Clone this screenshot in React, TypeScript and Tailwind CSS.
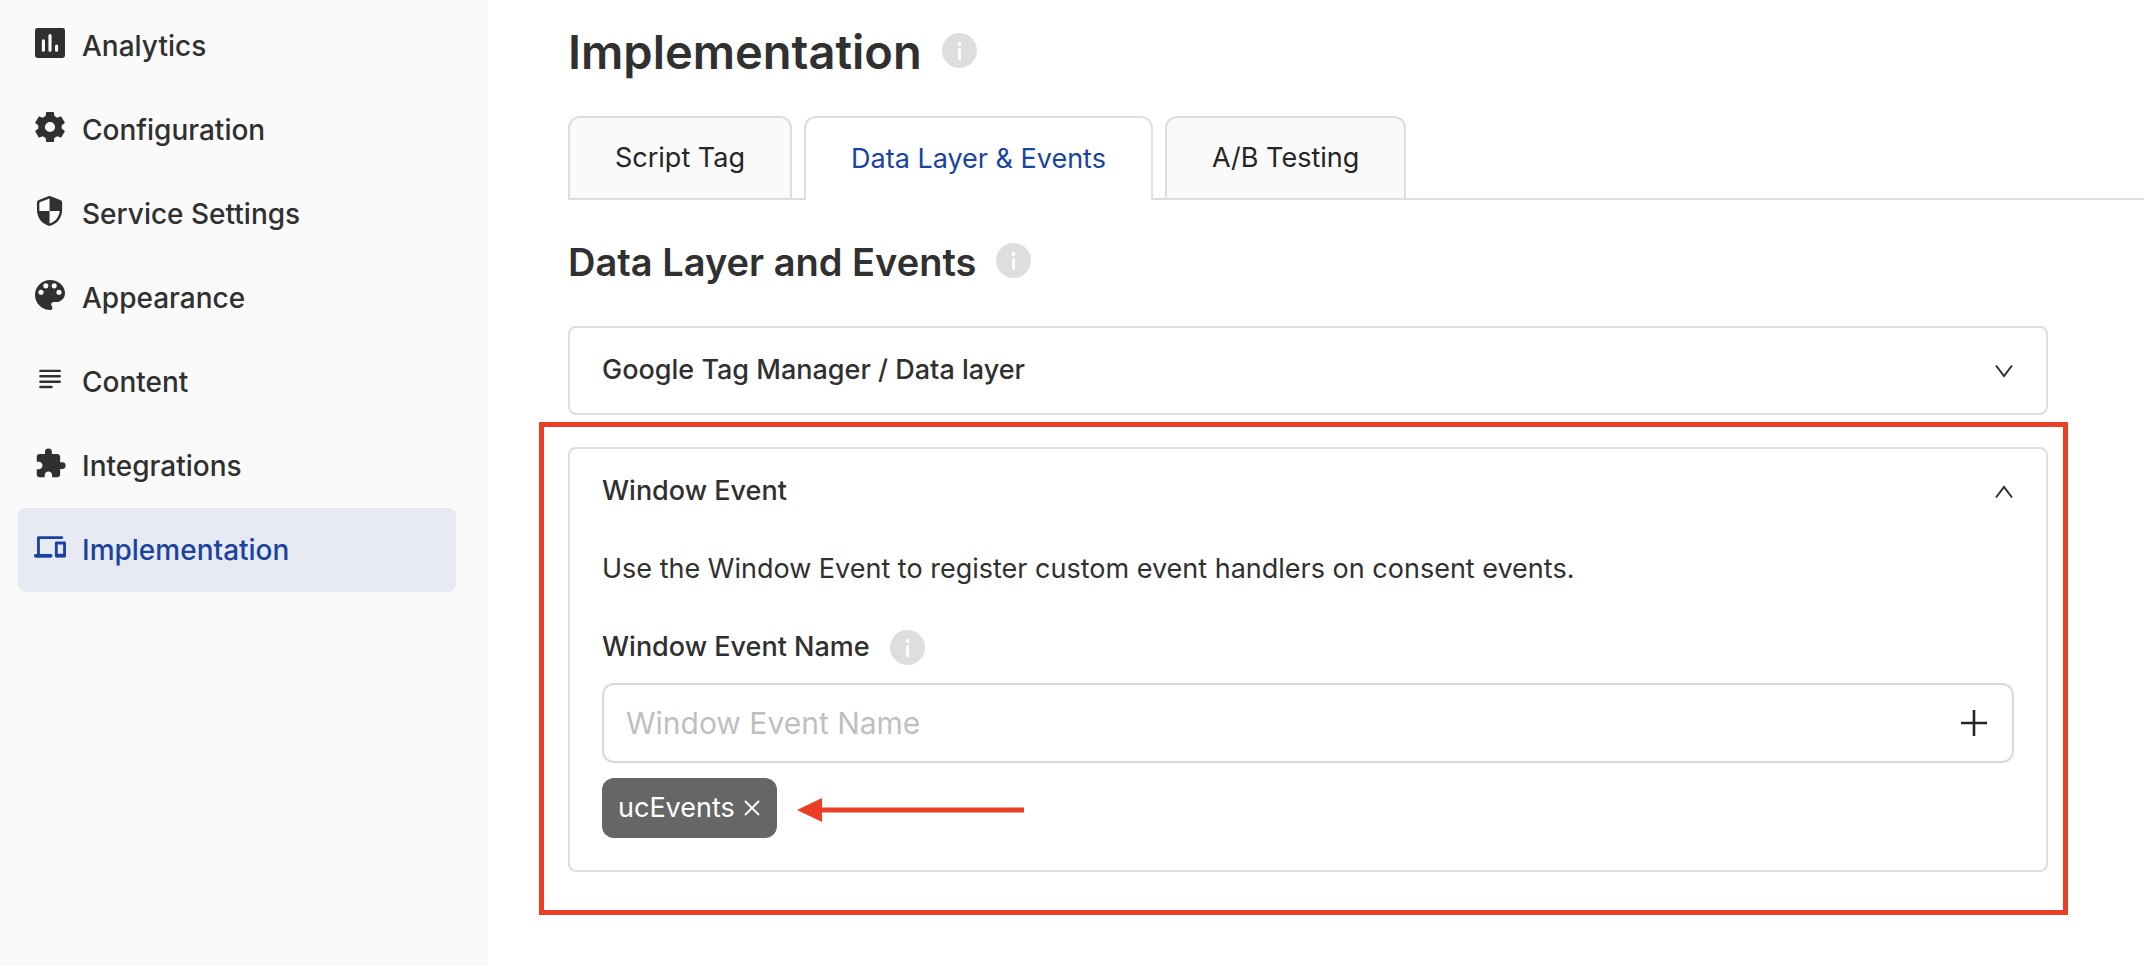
import { useState } from 'react';
import type { ReactNode } from 'react';
import { MdExtension } from 'react-icons/md';

const ChartIcon = () => (
    <svg viewBox="0 0 24 24" className="h-9 w-9" aria-hidden="true">
        <rect x="2" y="2" width="20" height="20" rx="1.6" fill="currentColor" />
        <path d="M7.6 10.600v6.200M12 7v9.800M16.400 14.100v2.700" stroke="#fafafa" strokeWidth="2.1" strokeLinecap="round" />
    </svg>
);

const GearIcon = () => (
    <svg viewBox="0 0 24 24" className="h-9 w-9" fill="currentColor" aria-hidden="true">
        <circle cx="12" cy="12" r="5.6" fill="none" stroke="currentColor" strokeWidth="4.4" />
        {[0, 60, 120, 180, 240, 300].map((angle) => (
            <path
                key={angle}
                d="M9.800 2.400h4.400l.5 3.600H9.300z"
                stroke="currentColor"
                strokeWidth=".8"
                strokeLinejoin="round"
                transform={`rotate(${angle} 12 12)`}
            />
        ))}
    </svg>
);

const ShieldIcon = () => (
    <svg viewBox="0 0 24 24" className="h-9 w-9" fill="currentColor" aria-hidden="true">
        <path d="M10.900 2.200 4.600 4.700C3.800 5 3.300 5.700 3.300 6.500V11c0 5.600 3.400 9.700 8.400 11 5-1.300 8.400-5.400 8.400-11V6.500c0-.8-.5-1.500-1.300-1.800l-6.300-2.500a2.200 2.200 0 0 0-1.600 0zM11.700 12h6.800c-.5 4-3 7.300-6.800 8.400V12H4.900V6.900c0-.4.2-.7.6-.9l6.200-2.400z" />
    </svg>
);

const PaletteIcon = () => (
    <svg viewBox="0 0 24 24" className="h-9 w-9" aria-hidden="true">
        <path
            d="M12 2C6.500 2 2 6.500 2 12s4.500 10 10 10c.9 0 1.600-.6 1.600-1.400 0-.5-.2-.9-.4-1.200-.2-.3-.4-.7-.4-1.100 0-.9.700-1.600 1.600-1.600h1.600c3.300 0 6-2.700 6-5.900C22 5.900 17.500 2 12 2z"
            fill="currentColor"
        />
        <g fill="#fafafa">
            <circle cx="6" cy="10.200" r="1.700" />
            <circle cx="9.200" cy="5.900" r="1.700" />
            <circle cx="14.800" cy="5.900" r="1.700" />
            <circle cx="18" cy="10.200" r="1.700" />
        </g>
    </svg>
);

const LinesIcon = () => (
    <svg viewBox="0 0 24 24" className="h-9 w-9" stroke="currentColor" strokeWidth="1.6" strokeLinecap="round" aria-hidden="true">
        <path d="M5.600 6.600h12.900M5.600 10.200h12.900M5.600 13.800h12.900M5.600 17.300h7.400" />
    </svg>
);

const DevicesIcon = () => (
    <svg viewBox="0 0 24 24" className="h-9 w-9" fill="none" stroke="currentColor" strokeWidth="1.9" strokeLinecap="round" strokeLinejoin="round" aria-hidden="true">
        <path d="M19.900 5.700H4.300v11" />
        <path d="M2.500 17.900h10" strokeWidth="2.400" />
        <rect x="16.200" y="9.300" width="5.500" height="8.700" />
        <path d="M16.500 17.700h5" strokeWidth="2.400" />
    </svg>
);

const navItems = [
    { label: 'Analytics', icon: <ChartIcon /> },
    { label: 'Configuration', icon: <GearIcon /> },
    { label: 'Service Settings', icon: <ShieldIcon /> },
    { label: 'Appearance', icon: <PaletteIcon /> },
    { label: 'Content', icon: <LinesIcon /> },
    { label: 'Integrations', icon: <MdExtension size={33} /> },
    { label: 'Implementation', icon: <DevicesIcon /> },
];

const tabs = ['Script Tag', 'Data Layer & Events', 'A/B Testing'];

const InfoButton = () => (
    <button type="button" aria-label="More information" className="h-[35px] w-[35px] shrink-0 rounded-full bg-[#dedede] text-white">
        <svg viewBox="0 0 35 35" className="h-[35px] w-[35px]" stroke="currentColor" strokeLinecap="round" aria-hidden="true">
            <path d="M17.500 11h.01" strokeWidth="3.800" />
            <path d="M17.500 16.500v9" strokeWidth="3" />
        </svg>
    </button>
);

const Chevron = ({ open }: { open: boolean }) => (
    <svg viewBox="0 0 20 14" className="h-[14px] w-5" fill="none" stroke="currentColor" strokeWidth="2" aria-hidden="true">
        <path d={open ? 'M2 12.500 10 2l8 10.500' : 'M2 1.500 10 12l8-10.500'} />
    </svg>
);

type PanelProps = {
    title: string;
    open: boolean;
    onToggle: () => void;
    children?: ReactNode;
};

const Panel = ({ title, open, onToggle, children }: PanelProps) => (
    <section className="rounded-lg border-2 border-[#dedede] bg-white">
        <h3>
            <button
                type="button"
                aria-expanded={open}
                onClick={onToggle}
                className="flex h-[85px] w-full items-center justify-between px-8 text-left text-[27px] font-medium"
            >
                {title}
                <Chevron open={open} />
            </button>
        </h3>
        {open && children}
    </section>
);

const App = () => {
    const [activeNav, setActiveNav] = useState('Implementation');
    const [activeTab, setActiveTab] = useState('Data Layer & Events');
    const [gtmOpen, setGtmOpen] = useState(false);
    const [windowOpen, setWindowOpen] = useState(true);
    const [draft, setDraft] = useState('');
    const [events, setEvents] = useState(['ucEvents']);

    const addEvent = () => {
        if (!draft.trim()) return;
        setEvents([...events, draft.trim()]);
        setDraft('');
    };

    return (
        <div className="flex min-h-screen bg-white font-[Inter,sans-serif] text-[#303030]">
            <aside className="w-[488px] shrink-0 bg-[#fafafa] py-1 pr-8 pl-[18px]">
                <nav aria-label="Main">
                    {navItems.map((item) => (
                        <a
                            key={item.label}
                            href="#"
                            onClick={() => setActiveNav(item.label)}
                            aria-current={activeNav === item.label ? 'page' : undefined}
                            className={`flex h-[84px] items-center gap-[14px] rounded-lg px-[14px] text-[28px] font-medium ${
                                activeNav === item.label ? 'bg-[#e7eaf3] text-[#1a43a0]' : ''
                            }`}
                        >
                            <span className="mb-[6px] flex h-9 w-9 shrink-0 items-center justify-center">{item.icon}</span>
                            {item.label}
                        </a>
                    ))}
                </nav>
            </aside>

            <main className="min-w-0 flex-1 pt-[22px] pl-20">
                <div className="flex items-center gap-5">
                    <h1 className="text-[47px] leading-[60px] font-semibold">Implementation</h1>
                    <span className="mb-[3px] flex">
                        <InfoButton />
                    </span>
                </div>

                <div role="tablist" className="mt-[34px] flex h-[84px] gap-3 border-b-2 border-[#dedede]">
                    {tabs.map((tab) => (
                        <button
                            key={tab}
                            type="button"
                            role="tab"
                            aria-selected={activeTab === tab}
                            onClick={() => setActiveTab(tab)}
                            className={`rounded-t-xl border-2 border-b-0 border-[#dedede] px-[45px] text-[27px] ${
                                activeTab === tab ? '-mb-[2px] bg-white text-[#1a43a0]' : 'bg-[#fafafa] text-[#252525]'
                            }`}
                        >
                            {tab}
                        </button>
                    ))}
                </div>

                <div className="pr-24">
                    <div className="mt-9 flex items-center gap-5">
                        <h2 className="text-[38px] leading-[52px] font-semibold">Data Layer and Events</h2>
                        <span className="mb-[3px] flex">
                            <InfoButton />
                        </span>
                    </div>

                    <div className="mt-[38px]">
                        <Panel title="Google Tag Manager / Data layer" open={gtmOpen} onToggle={() => setGtmOpen(!gtmOpen)} />
                    </div>

                    <div className="-mr-5 -ml-[29px] mt-[7px] border-[5px] border-[#ea3f25] pt-5 pr-[15px] pb-[38px] pl-6">
                        <Panel title="Window Event" open={windowOpen} onToggle={() => setWindowOpen(!windowOpen)}>
                            <div className="px-8 pt-[15px] pb-8">
                                <p className="text-[27px] leading-10">
                                    Use the Window Event to register custom event handlers on consent events.
                                </p>
                                <div className="mt-[38px] flex items-center gap-5">
                                    <label htmlFor="event-name" className="text-[27px] leading-10 font-medium">
                                        Window Event Name
                                    </label>
                                    <InfoButton />
                                </div>
                                <div className="mt-4 flex h-20 items-center rounded-xl border-2 border-[#d9d9d9] pr-[25px] pl-[22px]">
                                    <input
                                        id="event-name"
                                        type="text"
                                        value={draft}
                                        onChange={(e) => setDraft(e.target.value)}
                                        placeholder="Window Event Name"
                                        className="min-w-0 flex-1 bg-transparent text-[30px] outline-none placeholder:text-[#bfbfbf]"
                                    />
                                    <button type="button" aria-label="Add event" onClick={addEvent} className="text-[#252525]">
                                        <svg viewBox="0 0 26 26" className="h-[26px] w-[26px]" stroke="currentColor" strokeWidth="2.600" aria-hidden="true">
                                            <path d="M13 0v26M0 13h26" />
                                        </svg>
                                    </button>
                                </div>
                                <div className="mt-[15px] flex items-center gap-5">
                                    {events.map((event) => (
                                        <span key={event} className="flex h-15 items-center gap-2 rounded-xl bg-[#666] px-4 text-[27px] text-white">
                                            {event}
                                            <button
                                                type="button"
                                                aria-label={`Remove ${event}`}
                                                onClick={() => setEvents(events.filter((e) => e !== event))}
                                            >
                                                <svg viewBox="0 0 18 18" className="h-[18px] w-[18px]" stroke="currentColor" strokeWidth="1.800" aria-hidden="true">
                                                    <path d="m2 2 14 14M16 2 2 16" />
                                                </svg>
                                            </button>
                                        </span>
                                    ))}
                                    <svg viewBox="0 0 227 24" className="mt-1 h-6 w-[227px]" fill="#ea3f25" aria-hidden="true">
                                        <path d="M0 12 25 0v9.500h202v5H25V24z" />
                                    </svg>
                                </div>
                            </div>
                        </Panel>
                    </div>
                </div>
            </main>
        </div>
    );
};

export default App;
